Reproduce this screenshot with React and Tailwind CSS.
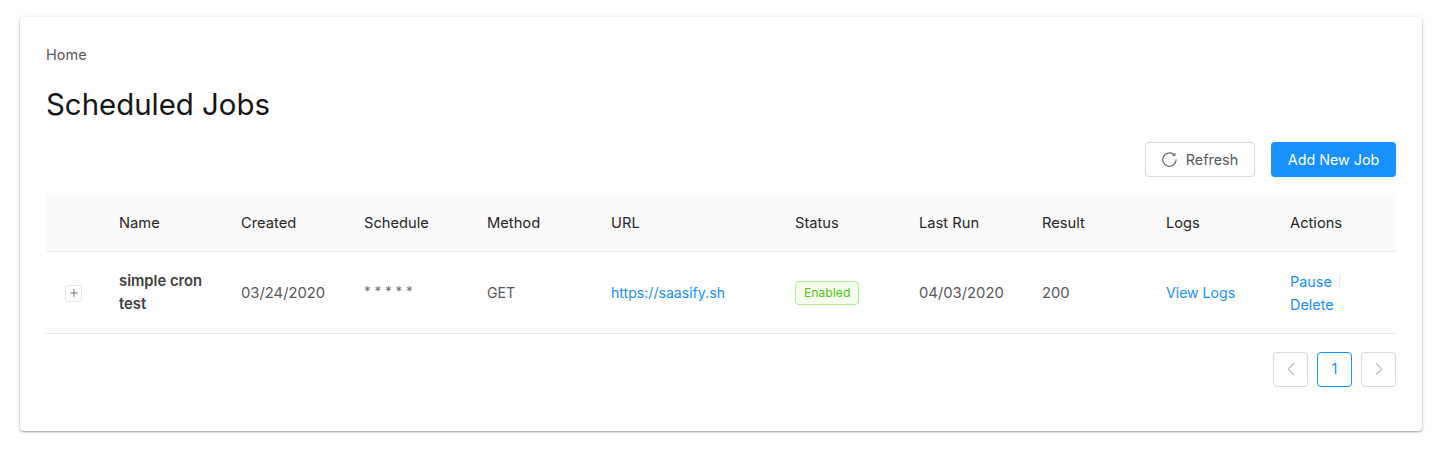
import { Plus, ChevronLeft, ChevronRight } from 'lucide-react'

const columns = [
  { label: '', width: 'w-[57px]' },
  { label: 'Name', width: 'w-[122px]' },
  { label: 'Created', width: 'w-[123px]' },
  { label: 'Schedule', width: 'w-[123px]' },
  { label: 'Method', width: 'w-[124px]' },
  { label: 'URL', width: 'w-[184px]' },
  { label: 'Status', width: 'w-[124px]' },
  { label: 'Last Run', width: 'w-[123px]' },
  { label: 'Result', width: 'w-[124px]' },
  { label: 'Logs', width: 'w-[124px]' },
  { label: 'Actions', width: 'w-[122px]' },
]

function RefreshIcon() {
  return (
    <svg width="15" height="15" viewBox="0 0 15 15" fill="none" stroke="#595959" strokeWidth="1.1">
      <path d="M12.3 2.9A6.7 6.7 0 1 0 14.2 7.6" />
      <path d="M13.1 0.9V3.6H10.5" strokeWidth="0.9" />
    </svg>
  )
}

export default function App() {
  return (
    <div className="h-[456px] bg-white pt-[17px] pl-[20px] pr-[18px] font-['Inter','Liberation_Sans',sans-serif] text-[14.5px] text-[#595959]">
      <div className="h-[414px] rounded-[4px] bg-white px-[26px] pt-[29px] shadow-[0_1px_2px_rgba(0,0,0,0.35),0_0_6px_rgba(0,0,0,0.08)]">
        <div className="h-[18px] leading-[18px]">Home</div>

        <h1 className="mt-[21px] h-[40px] text-[29.4px] leading-[40px] font-normal text-[#141414]">Scheduled Jobs</h1>

        <div className="mt-[17px] flex justify-end gap-[16px]">
          <button className="flex h-[35px] w-[110px] items-center justify-center gap-[9px] rounded-[4px] border border-[#d9d9d9] bg-white">
            <RefreshIcon />
            <span className="text-[14.4px]">Refresh</span>
          </button>
          <button className="h-[35px] w-[125px] rounded-[4px] bg-[#1890ff] text-[14.3px] text-white">Add New Job</button>
        </div>

        <table className="mt-[16px] w-[1350px] table-fixed border-collapse">
          <thead>
            <tr className="h-[58px] border-b border-[#e8e8e8] bg-[#fafafa]">
              {columns.map((col, i) => (
                <th key={i} className={`${col.width} px-[16px] pt-[2px] text-left text-[14.7px] font-normal text-[#262626]`}>
                  {col.label}
                </th>
              ))}
            </tr>
          </thead>
          <tbody>
            <tr className="h-[82px] border-b border-[#e8e8e8]">
              <td className="px-[19px] pt-[2px]">
                <span className="flex h-[17px] w-[17px] items-center justify-center rounded-[2px] border border-[#e8e8e8] text-[#404040]">
                  <Plus size={12} strokeWidth={1.4} />
                </span>
              </td>
              <td className="pl-[16px] pr-[10px] pt-[2px] text-[14.8px] leading-[23px] font-semibold text-[#404040]">simple cron test</td>
              <td className="px-[16px] pt-[2px] text-[14.8px]">03/24/2020</td>
              <td className="px-[16px] pb-[1px] text-[13.4px] text-[#737373]">* * * * *</td>
              <td className="px-[16px] pt-[2px] text-[14.2px]">GET</td>
              <td className="px-[16px] pt-[2px] text-[14.1px] text-[#1890ff]">https://saasify.sh</td>
              <td className="px-[16px] pt-[2px]">
                <span className="inline-block h-[24px] rounded-[4px] border border-[#b7eb8f] bg-[#f6ffed] px-[8px] text-[12.2px] leading-[22px] text-[#52c41a]">
                  Enabled
                </span>
              </td>
              <td className="px-[16px] pt-[2px] text-[14.8px]">04/03/2020</td>
              <td className="px-[16px] pt-[2px] text-[14.8px]">200</td>
              <td className="px-[16px] pt-[2px] text-[14.1px] text-[#1890ff]">View Logs</td>
              <td className="px-[16px] pt-[2px] text-[14.4px] leading-[23px] text-[#1890ff]">
                <div className="flex items-center">
                  Pause
                  <span className="ml-[7px] h-[15px] w-px bg-[#e8e8e8]" />
                </div>
                <div>Delete</div>
              </td>
            </tr>
          </tbody>
        </table>

        <div className="mt-[18px] flex justify-end gap-[9px]">
          <span className="flex h-[35px] w-[35px] items-center justify-center rounded-[4px] border border-[#d9d9d9] text-[#bfbfbf]">
            <ChevronLeft size={22} strokeWidth={1.2} />
          </span>
          <span className="flex h-[35px] w-[35px] items-center justify-center rounded-[4px] border border-[#1890ff] text-[#1890ff]">1</span>
          <span className="flex h-[35px] w-[35px] items-center justify-center rounded-[4px] border border-[#d9d9d9] text-[#bfbfbf]">
            <ChevronRight size={22} strokeWidth={1.2} />
          </span>
        </div>
      </div>
    </div>
  )
}
